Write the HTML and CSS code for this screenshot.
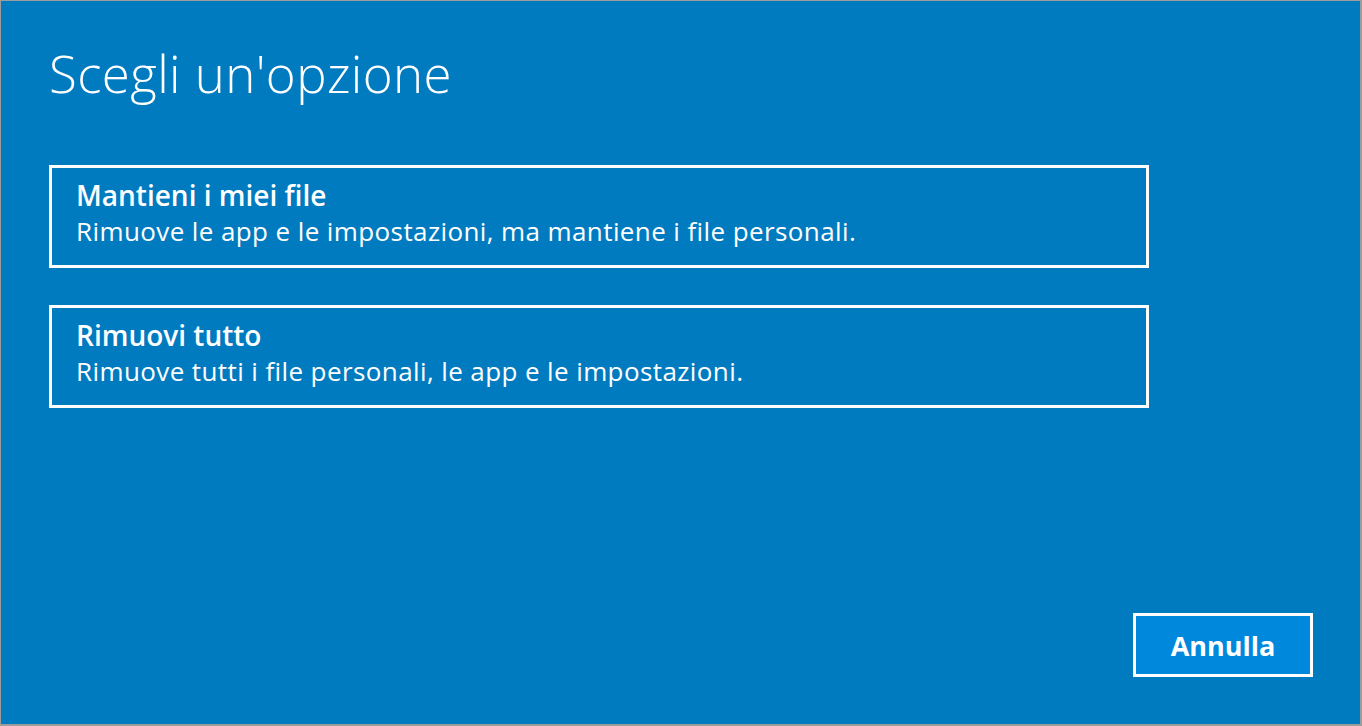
FILE: index.html
```html
<!DOCTYPE html>
<html lang="it">
<head>
<meta charset="utf-8">
<title>Scegli un'opzione</title>
<link rel="stylesheet" href="styles.css">
</head>
<body>
<main class="panel">
  <h1 class="title">Scegli un'opzione</h1>
  <div class="options">
    <button class="option">
      <span class="option-title">Mantieni i miei file</span>
      <span class="option-desc">Rimuove le app e le impostazioni, ma mantiene i file personali.</span>
    </button>
    <button class="option">
      <span class="option-title">Rimuovi tutto</span>
      <span class="option-desc">Rimuove tutti i file personali, le app e le impostazioni.</span>
    </button>
  </div>
  <div class="footer">
    <button class="cancel">Annulla</button>
  </div>
</main>
</body>
</html>
```
FILE: styles.css
```css
html, body {
  margin: 0;
  height: 100%;
}
body {
  background: #9c9c9c;
  padding: 1px 2px 2px 1px;
  box-sizing: border-box;
  font-family: "Open Sans", "Noto Sans", sans-serif;
  color: #fff;
}
.panel {
  height: 100%;
  background: #007bc0;
  box-sizing: border-box;
  padding: 0 0 0 48px;
  display: flex;
  flex-direction: column;
}
.title {
  margin: 37px 0 0 0;
  font-weight: 300;
  font-size: 51px;
  line-height: 70px;
  letter-spacing: 0.4px;
}
.options {
  margin-top: 57px;
  display: flex;
  flex-direction: column;
  gap: 37px;
}
.option {
  width: 1100px;
  height: 103px;
  box-sizing: border-box;
  border: 3px solid #fff;
  background: transparent;
  color: #fff;
  text-align: left;
  padding: 10px 0 0 24px;
  display: flex;
  flex-direction: column;
  font-family: inherit;
  cursor: pointer;
}
.option-title {
  font-weight: 600;
  font-size: 28px;
  line-height: 35px;
}
.option-desc {
  font-weight: 400;
  font-size: 26px;
  line-height: 36px;
  letter-spacing: 0.4px;
}
.footer {
  margin-top: auto;
  display: flex;
  justify-content: flex-end;
  padding: 0 47px 47px 0;
}
.cancel {
  width: 180px;
  height: 64px;
  box-sizing: border-box;
  border: 3px solid #fff;
  background: #0088dc;
  color: #fff;
  font-family: inherit;
  font-weight: 700;
  font-size: 27px;
  padding: 0;
  cursor: pointer;
}
```
